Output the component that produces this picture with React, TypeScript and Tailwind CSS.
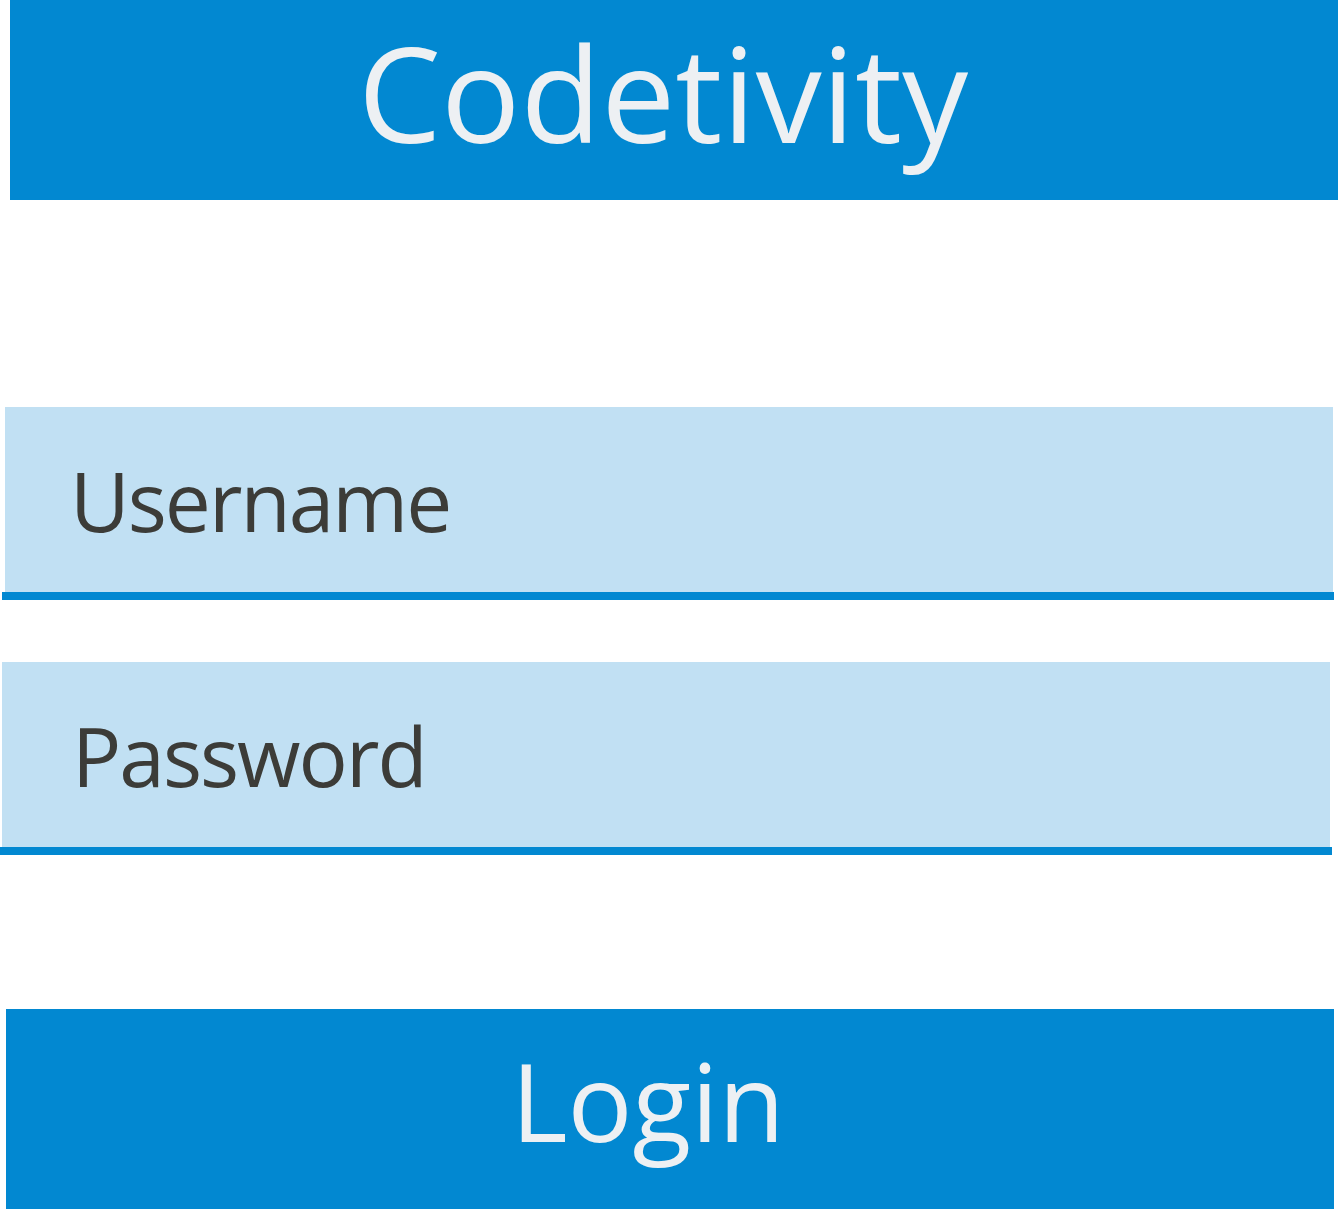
const font = { fontFamily: '"Open Sans", "Noto Sans", Arial, sans-serif' }

function Field({ label, className, pad }: { label: string; className: string; pad: string }) {
  return (
    <div className={className}>
      <div className={`flex h-[185px] items-center bg-[#c1e0f3] ${pad}`}>
        <span className="text-[82px] leading-none tracking-[-2px] text-[#3c3c38]">{label}</span>
      </div>
    </div>
  )
}

export default function App() {
  return (
    <div className="min-h-screen w-[1339px] bg-white" style={font}>
      <header className="ml-[10px] flex h-[200px] w-[1328px] items-center justify-center bg-[#0288d1] pb-[16px] pr-[22px]">
        <h1 className="text-[132px] leading-none text-[#edf0f3]">Codetivity</h1>
      </header>

      <div className="mt-[207px]">
        <Field label="Username" pad="pl-[65px]" className="ml-[5px] w-[1328px]" />
        <div className="ml-[2px] h-[8px] w-[1332px] bg-[#0288d1]" />
      </div>

      <div className="mt-[62px]">
        <Field label="Password" pad="pl-[70px]" className="ml-[2px] w-[1328px]" />
        <div className="h-[8px] w-[1332px] bg-[#0288d1]" />
      </div>

      <button className="ml-[6px] mt-[154px] flex h-[200px] w-[1328px] items-center justify-center bg-[#0288d1] pb-[16px] pr-[44px]">
        <span className="text-[108px] leading-none text-[#edf0f3]">Login</span>
      </button>
    </div>
  )
}
